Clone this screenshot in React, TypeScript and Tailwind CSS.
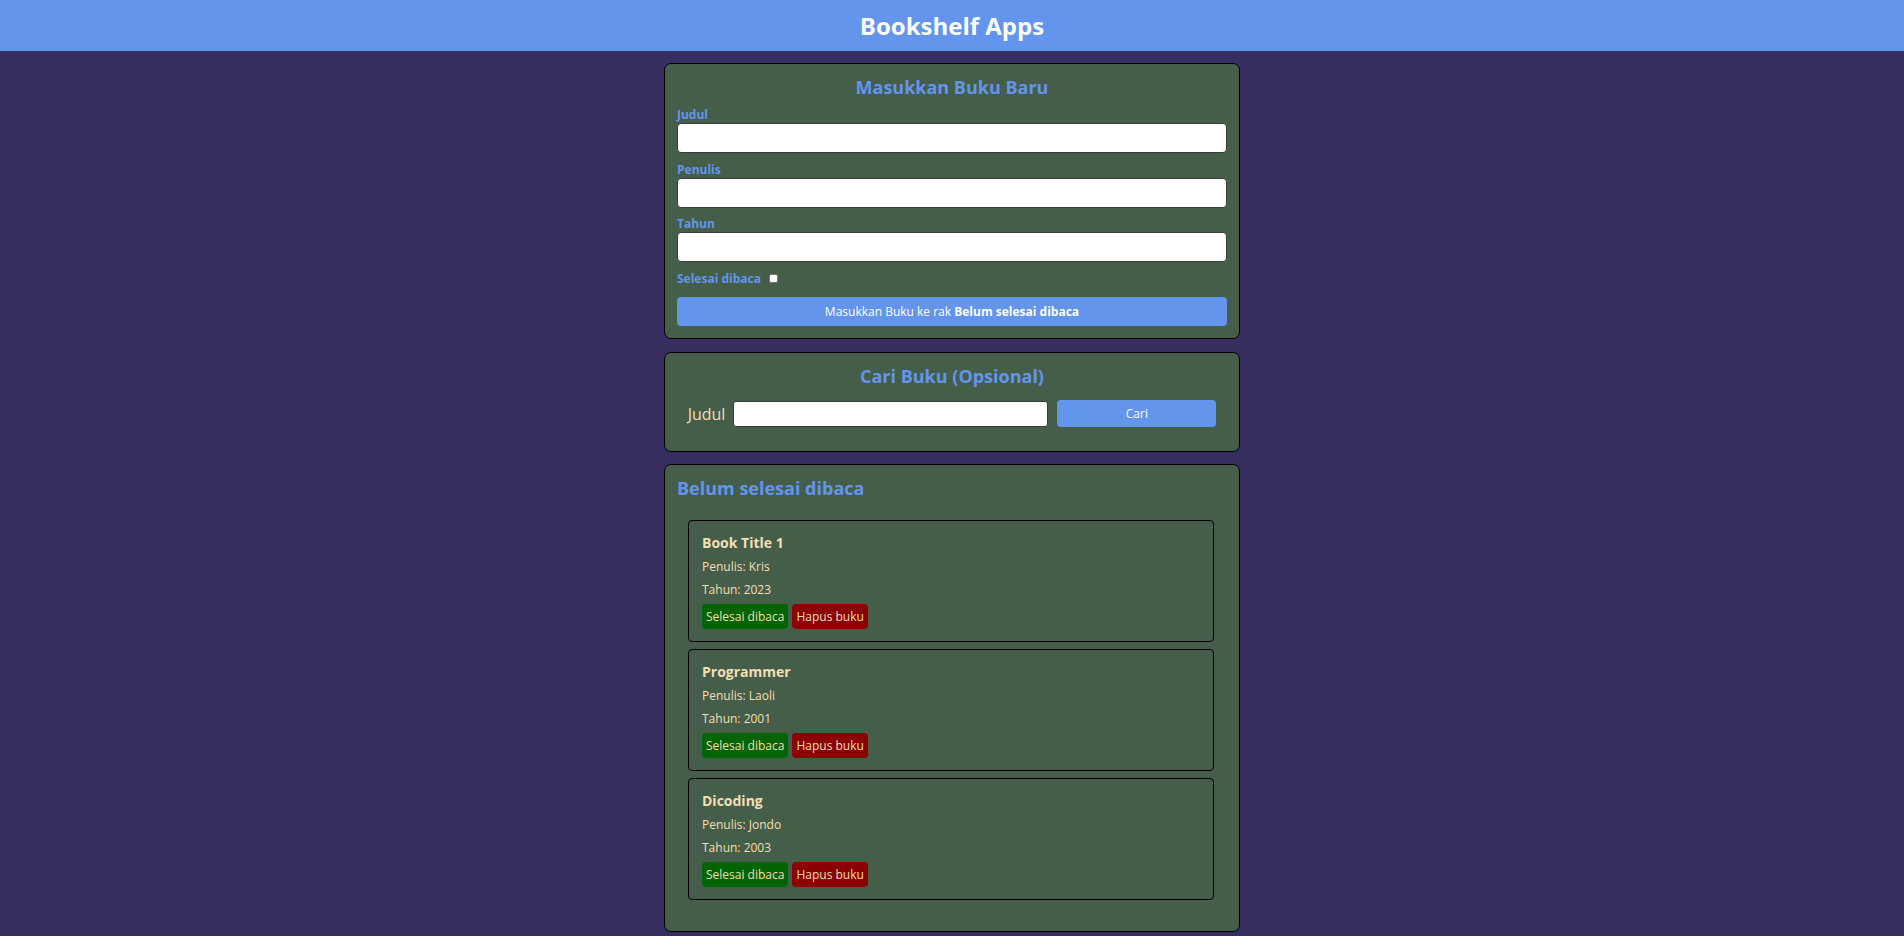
import React from "react";

const books = [
  { title: "Book Title 1", author: "Kris", year: 2023 },
  { title: "Programmer", author: "Laoli", year: 2001 },
  { title: "Dicoding", author: "Jondo", year: 2003 },
];

function Field({ label, first }: { label: string; first?: boolean }) {
  return (
    <div className={first ? "flex flex-col" : "flex flex-col mt-[7.5px]"}>
      <label className="text-[12px] leading-[17px] font-bold text-[#6495ED]">{label}</label>
      <input
        type="text"
        className="h-[30px] w-full bg-white border border-[#3a3a3a] rounded-[4px] px-2 text-[13px] outline-none"
      />
    </div>
  );
}

export default function App() {
  return (
    <div
      className="min-h-screen bg-[#352E5F]"
      style={{ fontFamily: '"Open Sans", "Noto Sans", sans-serif' }}
    >
      <header className="h-[51px] bg-[#6495ED] flex items-center justify-center">
        <h1 className="text-[24px] font-bold text-white leading-none">Bookshelf Apps</h1>
      </header>

      <main className="flex flex-col items-center pt-[12px] pb-[5px]">
        {/* Input section */}
        <section className="w-[576px] bg-[#455E4A] border border-black rounded-[7px] px-[12px] pt-[10px] pb-[12px]">
          <h2 className="text-center text-[18px] leading-[27px] font-bold text-[#6495ED] mb-[5px]">
            Masukkan Buku Baru
          </h2>
          <Field label="Judul" first />
          <Field label="Penulis" />
          <Field label="Tahun" />
          <div className="flex items-center mt-[8px] h-[17px]">
            <label className="text-[12px] leading-[17px] font-bold text-[#6495ED] mr-[8px]">
              Selesai dibaca
            </label>
            <input
              type="checkbox"
              className="appearance-none w-[9px] h-[9px] bg-white border border-[#767676] rounded-[2px]"
            />
          </div>
          <button className="mt-[10px] w-full h-[29px] bg-[#6495ED] rounded-[4px] text-white text-[12px] flex items-center justify-center">
            <span>
              Masukkan Buku ke rak <span className="font-bold">Belum selesai dibaca</span>
            </span>
          </button>
        </section>

        {/* Search section */}
        <section className="mt-[13px] w-[576px] bg-[#455E4A] border border-black rounded-[7px] px-[12px] pt-[10px] pb-[24px]">
          <h2 className="text-center text-[18px] leading-[27px] font-bold text-[#6495ED]">
            Cari Buku (Opsional)
          </h2>
          <div className="mt-[10px] flex items-center justify-center">
            <label className="text-[16px] leading-[22px] text-[#F5DEB3]">Judul</label>
            <input
              type="text"
              className="ml-[8px] w-[315px] h-[26px] bg-white border border-[#3a3a3a] rounded-[3px] outline-none"
            />
            <button className="ml-[9px] w-[159px] h-[27px] bg-[#6495ED] rounded-[4px] text-white text-[12px]">
              Cari
            </button>
          </div>
        </section>

        {/* Shelf */}
        <section className="mt-[12px] w-[576px] bg-[#455E4A] border border-black rounded-[7px] px-[12px] pt-[10px] pb-[31px]">
          <h2 className="text-[18px] leading-[27px] font-bold text-[#6495ED]">Belum selesai dibaca</h2>
          <div className="mt-[18px] flex flex-col gap-[7px]">
            {books.map((b) => (
              <article
                key={b.title}
                className="ml-[11px] w-[526px] border border-black rounded-[4px] pl-[13px] pr-[13px] pt-[12px] pb-[12px]"
              >
                <h3 className="text-[14px] leading-[20px] font-bold text-[#F5DEB3]">{b.title}</h3>
                <p className="mt-[5px] text-[12px] leading-[18px] text-[#F5DEB3]">Penulis: {b.author}</p>
                <p className="mt-[5px] text-[12px] leading-[18px] text-[#F5DEB3]">Tahun: {b.year}</p>
                <div className="mt-[5px] flex gap-[4px]">
                  <button className="h-[25px] px-[4px] bg-[#006400] rounded-[4px] text-[12px] text-[#F5DEB3]">
                    Selesai dibaca
                  </button>
                  <button className="h-[25px] px-[4px] bg-[#8B0000] rounded-[4px] text-[12px] text-[#F5DEB3]">
                    Hapus buku
                  </button>
                </div>
              </article>
            ))}
          </div>
        </section>
      </main>
    </div>
  );
}
